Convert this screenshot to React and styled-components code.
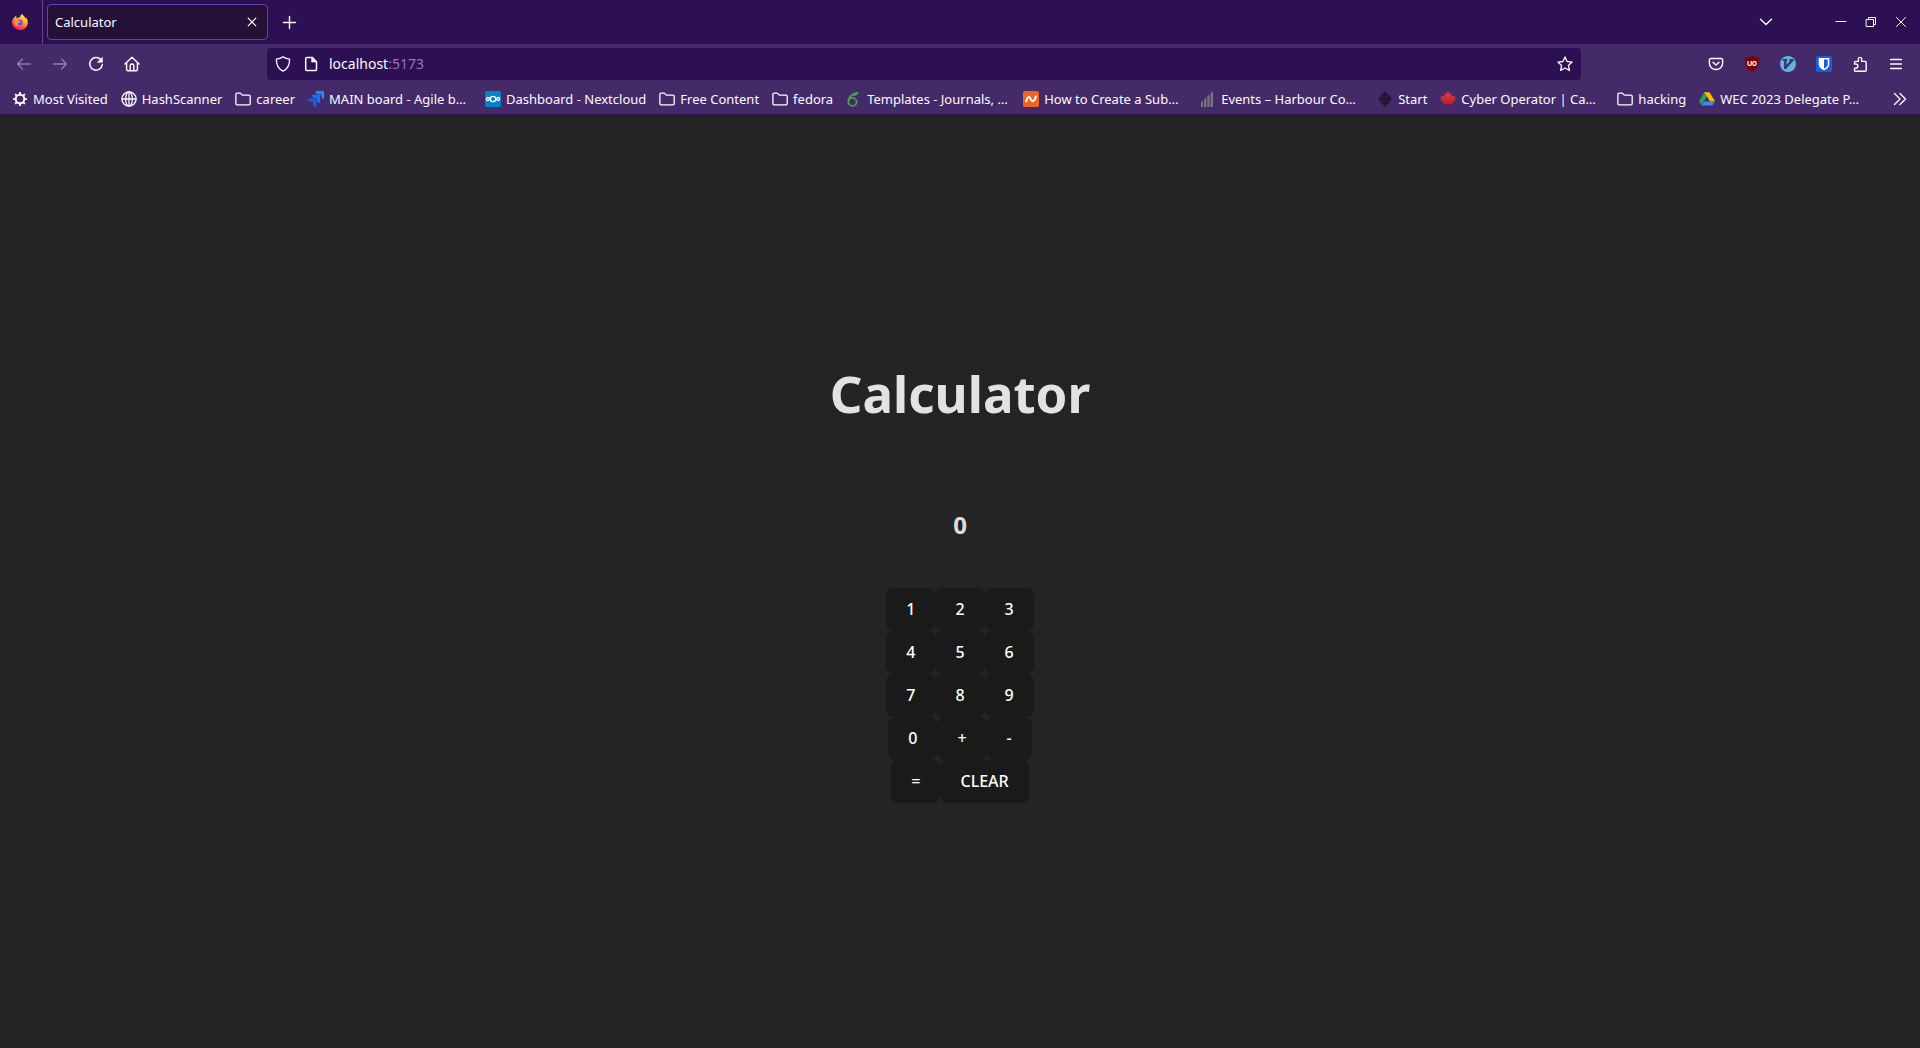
import React, { useState } from "react";
import styled, { createGlobalStyle } from "styled-components";

const GlobalStyle = createGlobalStyle`
  * { box-sizing: border-box; }
  html, body, #root { margin: 0; height: 100%; }
  body {
    background: #242424;
    font-family: "Noto Sans", "Open Sans", sans-serif;
    font-size: 14px;
    color: #fbfbfe;
  }
  button, input { font-family: inherit; }
  svg { display: block; flex: none; }
`;

const Window = styled.div`
  display: flex;
  flex-direction: column;
  min-height: 100%;
`;

const Chrome = styled.header`
  background: #452a69;
  border-bottom: 1px solid #2d1052;
`;

const TitleBar = styled.div`
  display: flex;
  align-items: center;
  height: 44px;
  background: #2d1053;
  padding-right: 4px;
`;

const BrandArea = styled.div`
  display: flex;
  align-items: center;
  width: 43px;
  height: 44px;
  padding-left: 12px;
  border-right: 1px solid #60477f;
  margin-right: 4px;
`;

const Tab = styled.div`
  display: flex;
  align-items: center;
  justify-content: space-between;
  width: 221px;
  height: 36px;
  padding: 0 3px 0 7px;
  background: #251138;
  border: 1px solid #6c3fb0;
  border-radius: 4px;
`;

const TabTitle = styled.span`
  font-size: 13px;
  line-height: 20px;
`;

const IconButton = styled.button`
  display: flex;
  align-items: center;
  justify-content: center;
  flex: none;
  width: ${(p) => p.$width || 36}px;
  height: ${(p) => p.$height || 32}px;
  padding: 0;
  border: 0;
  background: none;
  color: ${(p) => (p.disabled ? "#8f7fa6" : "#fbfbfe")};
`;

const WindowControls = styled.div`
  display: flex;
  align-items: center;
  margin-left: auto;
`;

const ControlGap = styled.div`
  width: 42px;
`;

const NavBar = styled.nav`
  display: flex;
  align-items: center;
  height: 40px;
  padding: 0 6px;
`;

const Spring = styled.div`
  flex: 0 1 117px;
`;

const UrlBar = styled.label`
  display: flex;
  align-items: center;
  flex: 1;
  min-width: 240px;
  height: 32px;
  padding: 0 8px;
  background: #2d1053;
  border-radius: 4px;
`;

const UrlIcons = styled.span`
  display: flex;
  gap: 12px;
  margin-right: 10px;
`;

const UrlField = styled.span`
  display: grid;
  flex: 1;
  font-size: 14px;
  line-height: 24px;
`;

const UrlInput = styled.input`
  grid-area: 1 / 1;
  width: 100%;
  padding: 0;
  border: 0;
  outline: 0;
  background: none;
  color: transparent;
  font-size: 14px;
  line-height: 24px;
`;

const UrlText = styled.span`
  grid-area: 1 / 1;
  pointer-events: none;
`;

const Port = styled.span`
  color: #8d7ba5;
`;

const Bookmarks = styled.div`
  display: flex;
  align-items: center;
  height: 30px;
  padding: 0 7px 0 8px;
`;

const Bookmark = styled.a`
  display: flex;
  align-items: center;
  flex: none;
  gap: 5px;
  width: ${(p) => (p.$long ? "177px" : "auto")};
  height: 26px;
  padding: 0 9px 0 4px;
  color: inherit;
  text-decoration: none;
  font-size: 13px;
  line-height: 20px;
  white-space: nowrap;
`;

const Overflow = styled.div`
  margin-left: auto;
`;

const Page = styled.main`
  display: flex;
  flex: 1;
  flex-direction: column;
  align-items: center;
  justify-content: center;
  padding-top: 4px;
  color: rgba(255, 255, 255, 0.87);
`;

const Heading = styled.h1`
  margin: 0 0 86px;
  font-size: 51px;
  line-height: 56px;
`;

const Display = styled.h2`
  margin: 0 0 45px;
  font-size: 24px;
  line-height: 36px;
`;

const Keypad = styled.div`
  display: flex;
  flex-direction: column;
`;

const KeyRow = styled.div`
  display: flex;
  justify-content: center;
`;

const Key = styled.button`
  padding: 10px 19px;
  border: 1px solid transparent;
  border-radius: 8px;
  background: #1a1a1a;
  color: #fff;
  font-size: 16px;
  font-weight: 500;
  line-height: 21px;
`;

const Line = ({ children, size = 16, width = 1.3, box = 16 }) => (
  <svg width={size} height={size} viewBox={`0 0 ${box} ${box}`} fill="none" stroke="currentColor"
    strokeWidth={width} strokeLinecap="round" strokeLinejoin="round" aria-hidden="true">
    {children}
  </svg>
);

const Pic = ({ children }) => (
  <svg width="16" height="16" viewBox="0 0 16 16" aria-hidden="true">{children}</svg>
);

const Firefox = () => (
  <svg width="16" height="16" viewBox="0 0 16 16" aria-hidden="true">
    <defs>
      <linearGradient id="flame" x1="0.8" y1="0" x2="0.3" y2="1">
        <stop offset="0" stopColor="#fff44f" />
        <stop offset="0.4" stopColor="#ffb02a" />
        <stop offset="0.75" stopColor="#ff4a3c" />
        <stop offset="1" stopColor="#e31587" />
      </linearGradient>
    </defs>
    <path fill="url(#flame)" d="M15.3 5.400c-.4-.9-1-1.700-1.600-2 .3.600.5 1.200.5 1.500C13 2.500 11 2.200 10.300 0 8.800.8 8.200 2.300 8.200 3.300 7 3.300 5.900 3.800 5.100 4.500 4.300 4 4.200 2.700 4.300 1.700 2.900 2.400 2 3.500 1.500 4.300.6 5.600 0 7 0 8.600A7.700 7.500 0 0 0 7.800 16c4.500 0 8-3.300 8-7.600 0-1.100-.2-2.100-.5-3z" />
    <circle cx="7.900" cy="8.300" r="2.900" fill="#7a4be8" />
    <path fill="#ff9a2c" d="M3 6.300c1.500-.6 3-.3 3.700.4.800.4 1.700.3 1.800.8 0 .6-1.700 1-1.900 1.300-.3.800-1.200 1-2 .5.700 1.700 2.100 2.300 3.600 1.900-1.800 1.700-5.500.8-6-2.200-.1-1 .1-2 .8-2.700z" />
  </svg>
);

const Folder = () => (
  <Line width={1.3}>
    <path d="M.9 12.700V3.300a1.200 1.200 0 0 1 1.200-1.200h3.200l2 2h6.500A1.400 1.400 0 0 1 15.200 5.500v7.100a1.300 1.300 0 0 1-1.300 1.300H2.200A1.200 1.200 0 0 1 .9 12.700z" />
  </Line>
);

const Gear = () => (
  <Pic>
    <circle cx="8" cy="8" r="4.300" fill="none" stroke="#fbfbfe" strokeWidth="2" />
    {[0, 45, 90, 135, 180, 225, 270, 315].map((a) => (
      <path key={a} d="M6.900 3.500 7.200 1h1.600l.3 2.500z" fill="#fbfbfe" transform={`rotate(${a} 8 8)`} />
    ))}
  </Pic>
);

const Globe = () => (
  <Line width={1.3}>
    <circle cx="8" cy="8" r="7.100" />
    <ellipse cx="8" cy="8" rx="3.400" ry="7.100" />
    <path d="M1 8h14M8 1v14" />
  </Line>
);

const Jira = () => (
  <Pic>
    <path fill="#2684ff" d="M7.300 0H16v8.600a3.700 3.700 0 0 1-2.700-3.500V3.400h-2A3.700 3.700 0 0 1 7.300 0z" />
    <path fill="#1a70ea" d="M3.700 3.800h8.400v8.500a3.700 3.700 0 0 1-3.500-3.600V7.200H7.300a3.600 3.600 0 0 1-3.600-3.400z" />
    <path fill="#0f62dc" d="M0 7.500h8.400V16a3.700 3.700 0 0 1-3.500-3.700v-1.500H3.500A3.600 3.600 0 0 1 0 7.500z" />
  </Pic>
);

const Nextcloud = () => (
  <Pic>
    <rect width="16" height="16" rx="1.500" fill="#0082c9" />
    <g fill="none" stroke="#fff" strokeWidth="1.300">
      <circle cx="8" cy="8" r="2.700" />
      <circle cx="2.900" cy="8" r="1.500" />
      <circle cx="13.100" cy="8" r="1.500" />
    </g>
  </Pic>
);

const Overleaf = () => (
  <Pic>
    <g fill="none" stroke="#46a247" strokeWidth="1.800">
      <ellipse cx="6.500" cy="10.900" rx="4.100" ry="4" />
      <path d="M2.500 10.500C2.500 7 4.600 4.400 7.800 3.400" />
    </g>
    <path fill="#46a247" d="M5.800 4.200C6.400 1.600 9.500 1.200 12.700 1c-.5 2.600-2.300 3.900-5.200 3.700z" />
  </Pic>
);

const Wave = () => (
  <Pic>
    <rect width="16" height="16" rx="2" fill="#f26322" />
    <path d="M3.200 10.300c1.200-5 3.100-5.200 4.300-2.700 1.300 3.300 3.600 4.100 5.400-2.100" fill="none" stroke="#fff" strokeWidth="2.100" strokeLinecap="round" />
  </Pic>
);

const Bars = () => (
  <Pic>
    <path fill="#77727f" d="M1 11l2-1.200V16H1zM4 8.200l2.300-1.600V16H4zM7.300 5.200l2.300-1.600V16H7.300zM10.600 2.200 13 .2V16h-2.400z" />
  </Pic>
);

const Diamond = () => (
  <Pic>
    <path d="M8 0l7 8-7 8-7-8z" fill="#211633" />
    <path d="M4 5.500h8M2.500 8h11M4 10.500h8" stroke="#3a2657" strokeWidth=".8" strokeDasharray="1 1" />
  </Pic>
);

const Maple = () => (
  <Pic>
    <defs>
      <linearGradient id="leaf" x1="0" y1="0" x2="0" y2="1">
        <stop offset="0" stopColor="#e8413c" />
        <stop offset="1" stopColor="#b3161d" />
      </linearGradient>
    </defs>
    <path fill="url(#leaf)" d="M8 0 6.200 3 4.500 2.200 5 6 2.900 4.200l-.5 1.500L.3 5.500 1.200 8 0 8.800 4 11.700l-.4 1.800 3.900-.6V16h1v-3.100l3.900.6-.4-1.800 4-2.900-1.200-.8.900-2.500-2.100.2-.5-1.500L11 6l.5-3.800-1.700.8z" />
  </Pic>
);

const Drive = () => (
  <Pic>
    <path fill="#1ea362" d="M5.300 1.200H8L8 5.600 2.700 14.500 0 10.200z" />
    <path fill="#ffba00" d="M5.300 1.200h5.200l5.500 9h-5.300z" />
    <path fill="#4285f4" d="M5.300 10.200H16l-2.600 4.400H2.700z" />
    <path fill="#452a69" d="M8 5.800 5.400 10.200h5.200z" />
  </Pic>
);

const UBlock = () => (
  <Pic>
    <path fill="#800000" d="M8 0c2 1 4 1.500 7 1.500C15 8.500 14.500 12.500 8 16 1.500 12.500 1 8.500 1 1.500 4 1.500 6 1 8 0z" />
    <g fill="none" stroke="#fff" strokeWidth="1.200">
      <path d="M4 5v3.200Q4 9.300 5 9.300H6.200Q7.200 9.300 7.200 8.200V5" />
      <rect x="8.800" y="5.600" width="3.200" height="3.700" rx="1.300" />
    </g>
  </Pic>
);

const Vimium = () => (
  <Pic>
    <circle cx="8" cy="8" r="8" fill="#66b1e3" />
    <path fill="#38376b" d="M2.300 3h5v1.200l-.8.600v4.100l3.500-4-.6-.5V3h4.400v1.200L6 13.100H4.100V4.900L2.300 4.200z" />
  </Pic>
);

const Bitwarden = () => (
  <Pic>
    <rect width="16" height="16" rx="1.500" fill="#175ddc" />
    <path fill="#fff" d="M2.700 2h10.600v6.500c0 2.700-2.600 4.500-5.300 5.800-2.700-1.300-5.300-3.100-5.300-5.800z" />
    <path fill="#175ddc" d="M8 3.500h3.800v5c0 1.600-1.600 2.900-3.800 4.100z" />
  </Pic>
);

const bookmarks = [
  { icon: Gear, label: "Most Visited" },
  { icon: Globe, label: "HashScanner" },
  { icon: Folder, label: "career" },
  { icon: Jira, label: "MAIN board - Agile b…", long: true },
  { icon: Nextcloud, label: "Dashboard - Nextcloud" },
  { icon: Folder, label: "Free Content" },
  { icon: Folder, label: "fedora" },
  { icon: Overleaf, label: "Templates - Journals, …", long: true },
  { icon: Wave, label: "How to Create a Sub…", long: true },
  { icon: Bars, label: "Events – Harbour Co…", long: true },
  { icon: Diamond, label: "Start" },
  { icon: Maple, label: "Cyber Operator | Ca…", long: true },
  { icon: Folder, label: "hacking" },
  { icon: Drive, label: "WEC 2023 Delegate P…", long: true },
];

const keys = [
  ["1", "2", "3"],
  ["4", "5", "6"],
  ["7", "8", "9"],
  ["0", "+", "-"],
  ["=", "CLEAR"],
];

function Browser() {
  return (
    <Chrome>
      <TitleBar>
        <BrandArea><Firefox /></BrandArea>
        <Tab>
          <TabTitle>Calculator</TabTitle>
          <IconButton $width={24} $height={24} aria-label="Close tab">
            <Line width={1.2}><path d="M4.200 4.200l7.600 7.600M11.800 4.200l-7.600 7.600" /></Line>
          </IconButton>
        </Tab>
        <IconButton $width={42} aria-label="New tab">
          <Line width={1.4}><path d="M8.500 2.500v12M2.500 8.500h12" /></Line>
        </IconButton>
        <WindowControls>
          <IconButton aria-label="List all tabs">
            <Line width={1.400}><path d="M2.500 5.300 8 10.600l5.500-5.300" /></Line>
          </IconButton>
          <ControlGap />
          <IconButton $width={30} aria-label="Minimize">
            <Line width={1}><path d="M3 7.500h10" /></Line>
          </IconButton>
          <IconButton $width={30} aria-label="Restore">
            <Line width={1}><path d="M3.500 5.500h7v7h-7zM5.500 5.500v-2h7v7h-2" strokeLinejoin="miter" /></Line>
          </IconButton>
          <IconButton $width={30} aria-label="Close">
            <Line width={1}><path d="M3.500 3.500l9 9M12.500 3.500l-9 9" /></Line>
          </IconButton>
        </WindowControls>
      </TitleBar>
      <NavBar>
        <IconButton disabled aria-label="Back">
          <Line><path d="M14.500 8H1.500M6.500 3l-5 5 5 5" /></Line>
        </IconButton>
        <IconButton disabled aria-label="Forward">
          <Line><path d="M1.500 8h13M9.500 3l5 5-5 5" /></Line>
        </IconButton>
        <IconButton aria-label="Reload">
          <Line width={1.500}>
            <path d="M12.800 3.700A6.300 6.300 0 1 0 14.300 8.500" />
            <path d="M14.300 1.800v4.400H9.900z" fill="currentColor" strokeWidth=".8" />
          </Line>
        </IconButton>
        <IconButton aria-label="Home">
          <Line width={1.400}>
            <path d="M.9 8 8 1.200 15.100 8M2.600 6.800v6.600a1.300 1.300 0 0 0 1.300 1.300h8.200a1.300 1.300 0 0 0 1.300-1.300V6.800M6.200 14.500V9.800a1.800 1.800 0 0 1 3.600 0v4.700" />
          </Line>
        </IconButton>
        <Spring />
        <UrlBar>
          <UrlIcons>
            <Line><path d="M8 .9c2 1.300 4 2 6.600 2.200.2 5.600-1.300 9.700-6.600 12C2.700 12.800 1.200 8.700 1.400 3.100 4 2.900 6 2.200 8 .9z" /></Line>
            <Line width={1.500}>
              <path d="M2.700 2.600a1.200 1.200 0 0 1 1.200-1.200h5.300l4.300 4.300v7.700a1.200 1.200 0 0 1-1.200 1.200H3.900a1.200 1.200 0 0 1-1.200-1.200z" />
              <path d="M9 1.400l4.500 4.500H9z" fill="currentColor" strokeWidth=".8" />
            </Line>
          </UrlIcons>
          <UrlField>
            <UrlText aria-hidden="true">localhost<Port>:5173</Port></UrlText>
            <UrlInput aria-label="Address" defaultValue="localhost:5173" />
          </UrlField>
          <Line><path d="M8 .9l2.100 4.600 5 .6-3.700 3.400 1 5L8 12l-4.400 2.500 1-5L.9 6.100l5-.6z" /></Line>
        </UrlBar>
        <Spring />
        <IconButton aria-label="Save to Pocket">
          <Line width={1.400}>
            <path d="M2.700 2.500h10.600a1.300 1.300 0 0 1 1.300 1.300v3.500a6.600 6.200 0 0 1-13.200 0V3.800a1.300 1.300 0 0 1 1.300-1.300z" />
            <path d="M5 6.300l3 2.800 3-2.800" />
          </Line>
        </IconButton>
        <IconButton aria-label="uBlock Origin"><UBlock /></IconButton>
        <IconButton aria-label="Vimium"><Vimium /></IconButton>
        <IconButton aria-label="Bitwarden"><Bitwarden /></IconButton>
        <IconButton aria-label="Extensions">
          <Line width={1.400}>
            <path d="M2.500 8V6.400a1 1 0 0 1 1-1h2.900V2.700a1.700 1.700 0 0 1 3.300 0v2.700h3.500a1 1 0 0 1 1 1v7.800a1 1 0 0 1-1 1H3.500a1 1 0 0 1-1-1v-2h1.300a2 2 0 0 0 0-4.200z" />
          </Line>
        </IconButton>
        <IconButton aria-label="Menu">
          <Line width={1.300}><path d="M2.500 3.500h11M2.500 8h11M2.500 12.500h11" /></Line>
        </IconButton>
      </NavBar>
      <Bookmarks>
        {bookmarks.map(({ icon: Icon, label, long }) => (
          <Bookmark key={label} href="#" $long={long}>
            <Icon />
            <span>{label}</span>
          </Bookmark>
        ))}
        <Overflow>
          <IconButton $width={26} $height={26} aria-label="More bookmarks">
            <Line width={1.400}><path d="M2.500 2.500 8 8l-5.500 5.500M8 2.500 13.500 8 8 13.500" /></Line>
          </IconButton>
        </Overflow>
      </Bookmarks>
    </Chrome>
  );
}

function Calculator() {
  const [state, setState] = useState({ value: 0, stored: 0, op: "+", fresh: true });

  const apply = (s) => (s.op === "+" ? s.stored + s.value : s.stored - s.value);
  const press = (key) =>
    setState((s) => {
      if (key === "CLEAR") return { value: 0, stored: 0, op: "+", fresh: true };
      if (key === "=") return { value: apply(s), stored: 0, op: "+", fresh: true };
      if (key === "+" || key === "-") {
        const total = apply(s);
        return { value: total, stored: total, op: key, fresh: true };
      }
      return { ...s, value: s.fresh ? Number(key) : s.value * 10 + Number(key), fresh: false };
    });

  return (
    <Page>
      <Heading>Calculator</Heading>
      <Display>{state.value}</Display>
      <Keypad>
        {keys.map((row) => (
          <KeyRow key={row.join("")}>
            {row.map((key) => (
              <Key key={key} onClick={() => press(key)}>{key}</Key>
            ))}
          </KeyRow>
        ))}
      </Keypad>
    </Page>
  );
}

export default function App() {
  return (
    <Window>
      <GlobalStyle />
      <Browser />
      <Calculator />
    </Window>
  );
}
